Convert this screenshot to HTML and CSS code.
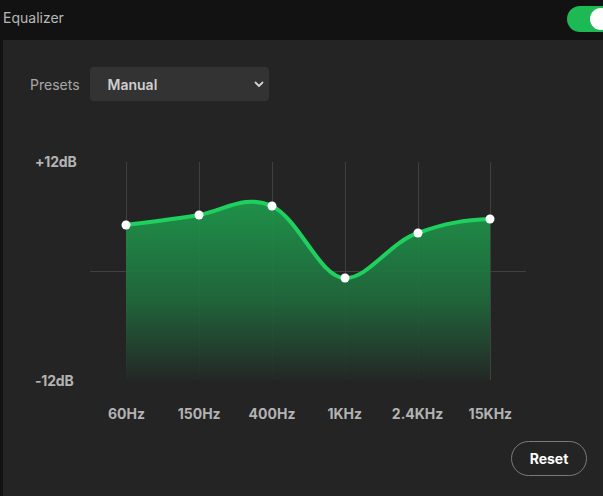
FILE: index.html
```html
<!DOCTYPE html>
<html lang="en">
    <head>
        <meta charset="UTF-8" />
        <title>Equalizer</title>
        <link rel="stylesheet" href="styles.css">
    </head>

    <body>
        <div class="topbar">
            <span class="title">Equalizer</span>
            <div class="toggle"><div class="knob"></div></div>
        </div>
        <div class="panel">
            <div class="presets">
                <span class="presetsLabel">Presets</span>
                <div class="select">
                    <span>Manual</span>
                    <svg width="10" height="8" viewBox="0 0 10 8">
                        <path d="M1.5 2.5 L5 6 L8.5 2.5" fill="none" stroke="#d0d0d0" stroke-width="1.8" stroke-linecap="round" stroke-linejoin="round" />
                    </svg>
                </div>
            </div>
            <div class="chart">
                <div class="dbLabels">
                    <span>+12dB</span>
                    <span>-12dB</span>
                </div>
                <svg class="graph" width="436" height="250" viewBox="0 0 436 250">
                    <defs>
                        <linearGradient id="fillGrad" gradientUnits="userSpaceOnUse" x1="0" y1="50" x2="0" y2="230">
                            <stop offset="0" stop-color="#1e9b4c" />
                            <stop offset="0.55" stop-color="#206a3c" />
                            <stop offset="1" stop-color="#232826" />
                        </linearGradient>
                    </defs>
                    <!-- grid -->
                    <g stroke="#404040" stroke-width="1">
                        <line x1="0" y1="121.5" x2="436" y2="121.5" />
                        <line x1="36.5" y1="12" x2="36.5" y2="230" />
                        <line x1="109.5" y1="12" x2="109.5" y2="230" />
                        <line x1="182.5" y1="12" x2="182.5" y2="230" />
                        <line x1="255.5" y1="12" x2="255.5" y2="230" />
                        <line x1="328.5" y1="12" x2="328.5" y2="230" />
                        <line x1="400.5" y1="12" x2="400.5" y2="230" />
                    </g>
                    <path d="M36,75 C60,72 85,69 109,65 C135,60 155,44 182,56 C210,70 230,128 255,128 C278,129 300,92 328,83 C355,73 375,70 400,69 L400,230 L36,230 Z" fill="url(#fillGrad)" opacity="0.92" />
                    <path d="M36,75 C60,72 85,69 109,65 C135,60 155,44 182,56 C210,70 230,128 255,128 C278,129 300,92 328,83 C355,73 375,70 400,69" fill="none" stroke="#1ed15f" stroke-width="4" stroke-linecap="round" />
                    <g fill="#fff">
                        <circle cx="36" cy="75" r="4.5" />
                        <circle cx="109" cy="65" r="4.5" />
                        <circle cx="182" cy="56" r="4.5" />
                        <circle cx="255" cy="128" r="4.5" />
                        <circle cx="328" cy="83" r="4.5" />
                        <circle cx="400" cy="69" r="4.5" />
                    </g>
                </svg>
            </div>
            <div class="freqLabels">
                <span>60Hz</span>
                <span>150Hz</span>
                <span>400Hz</span>
                <span>1KHz</span>
                <span>2.4KHz</span>
                <span>15KHz</span>
            </div>
            <div class="actions">
                <button class="reset">Reset</button>
            </div>
        </div>
    </body>
</html>
```

FILE: styles.css
```css
body {
    margin: 0px;
    background: #121212;
    font-family: Inter, "Noto Sans", "Liberation Sans", sans-serif;
    overflow: hidden;
}

.topbar {
    height: 40px;
    display: flex;
    align-items: center;
    justify-content: space-between;
    padding-left: 3px;
}

.title {
    color: #b8b8b8;
    font-size: 14px;
    margin-top: -5px;
}

.toggle {
    width: 48px;
    height: 26px;
    border-radius: 13px;
    background: #1db954;
    margin-right: -12px;
    margin-top: -3px;
    display: flex;
    align-items: center;
    justify-content: flex-end;
    padding-right: 3px;
    box-sizing: border-box;
}

.knob {
    width: 22px;
    height: 22px;
    border-radius: 50%;
    background: #fff;
}

.panel {
    margin-left: 3px;
    height: 456px;
    background: #242424;
}

.presets {
    display: flex;
    align-items: center;
    padding-top: 27px;
    padding-left: 27px;
    gap: 10px;
}

.presetsLabel {
    color: #a8a8a8;
    font-size: 14px;
}

.select {
    width: 179px;
    height: 34px;
    box-sizing: border-box;
    background: #333333;
    border-radius: 4px;
    display: flex;
    align-items: center;
    justify-content: space-between;
    padding: 0px 5px 0px 18px;
    color: #cfcfcf;
    font-size: 14px;
    font-weight: 600;
}

.chart {
    display: flex;
    margin-top: 49px;
}

.dbLabels {
    width: 87px;
    height: 235px;
    margin-top: 4px;
    box-sizing: border-box;
    padding-left: 32px;
    display: flex;
    flex-direction: column;
    justify-content: space-between;
    color: #b3b3b3;
    font-size: 14px;
    font-weight: 700;
    line-height: 16px;
    letter-spacing: -0.2px;
}

.graph {
    display: block;
}

.freqLabels {
    display: grid;
    grid-template-columns: repeat(6, 72.8px);
    margin-left: 87px;
    margin-top: 5px;
    color: #b3b3b3;
    font-size: 14px;
    font-weight: 700;
    line-height: 17px;
}

.freqLabels span {
    text-align: center;
}

.actions {
    display: flex;
    justify-content: flex-end;
    padding-right: 16px;
    margin-top: 19px;
}

.reset {
    width: 76px;
    height: 35px;
    border-radius: 18px;
    border: 1px solid #7a7a7a;
    background: transparent;
    color: #fff;
    font-family: Inter, "Noto Sans", "Liberation Sans", sans-serif;
    font-size: 14px;
    font-weight: 700;
}
```
